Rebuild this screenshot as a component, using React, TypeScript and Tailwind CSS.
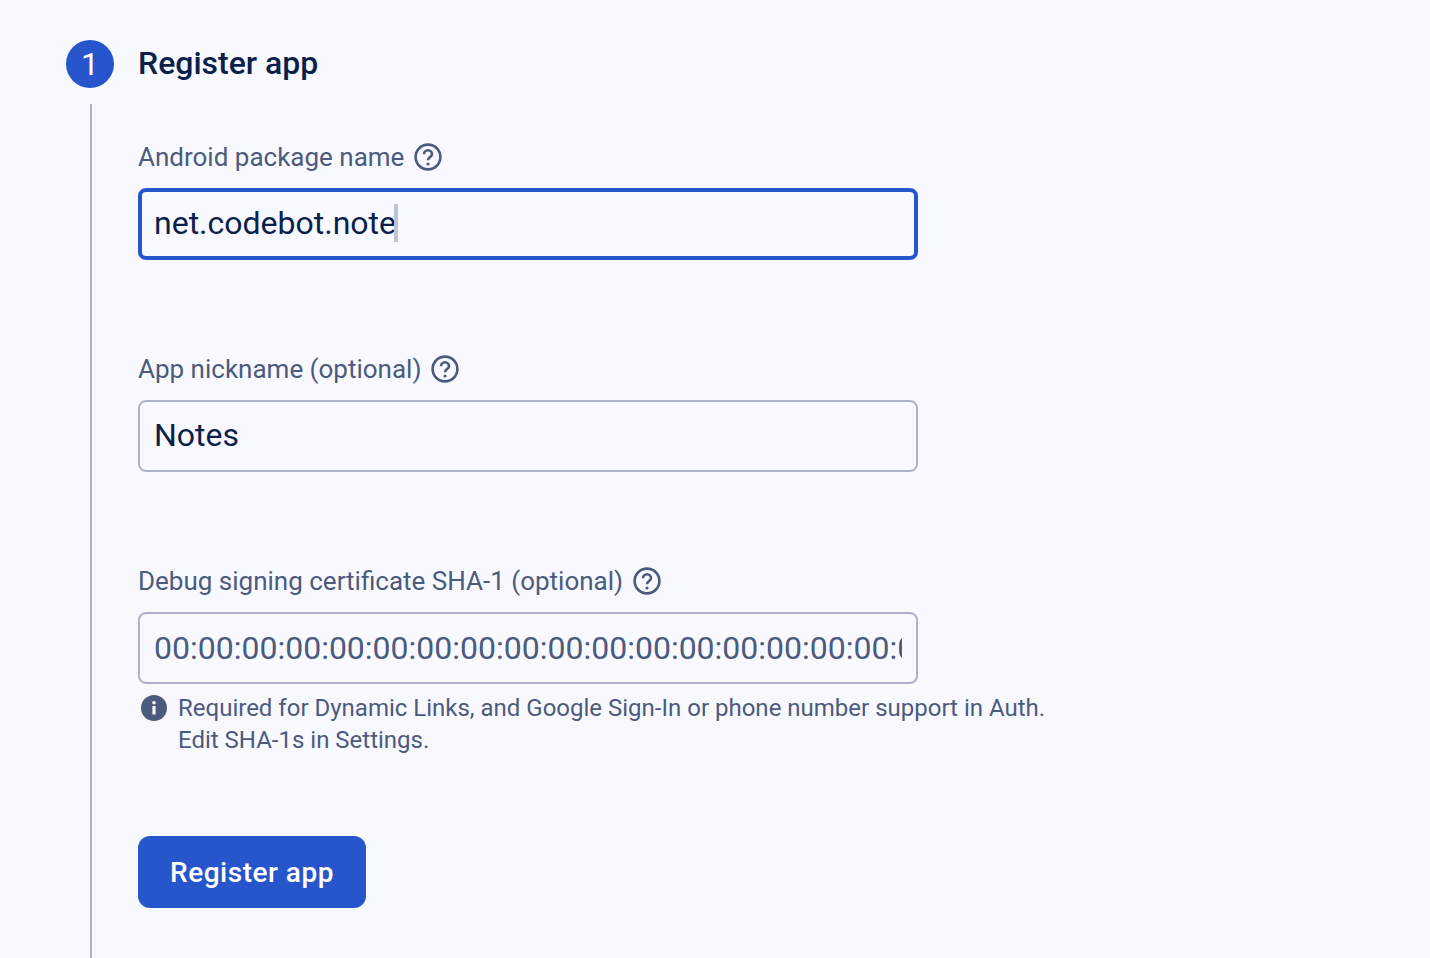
import React from "react";

function HelpIcon() {
  return (
    <svg width="28" height="28" viewBox="0 0 28 28" fill="none" className="block shrink-0">
      <circle cx="14" cy="14" r="12.4" stroke="#4c5a7e" strokeWidth="2.6" />
      <path d="M10 11.2a4 4 0 0 1 8 0c0 2.7-4 3-4 6" stroke="#4c5a7e" strokeWidth="2.6" />
      <circle cx="14" cy="21" r="1.6" fill="#4c5a7e" />
    </svg>
  );
}

function FieldLabel({ text }: { text: string }) {
  return (
    <div className="flex h-[28px] items-center gap-[10px] text-[26px] leading-[28px] text-[#4c5a7e]">
      <span>{text}</span>
      <HelpIcon />
    </div>
  );
}

export default function App() {
  return (
    <div className="h-[958px] overflow-hidden bg-[#f8f9fe] font-['Roboto',sans-serif]">
      <div className="flex items-center gap-[24px] pl-[66px] pt-[40px]">
        <div className="flex h-[48px] w-[48px] items-center justify-center rounded-full bg-[#2756cc] text-[32px] font-normal text-white">
          1
        </div>
        <h1 className="h-[48px] text-[32px] leading-[46px] font-medium text-[#0b1f4d]">Register app</h1>
      </div>

      <div className="mt-[16px] ml-[90px] h-[854px] border-l-2 border-[#adb3c9] pl-[46px] pt-[39px]">
        <FieldLabel text="Android package name" />
        <div className="mt-[17px] flex h-[72px] w-[780px] items-center rounded-[8px] border-[4px] border-[#2756cc] pb-[2px] pl-[12px] text-[32px] text-[#0b1f4d]">
          <span>net.codebot.note</span>
          <span className="ml-[-2px] h-[38px] w-[4px] bg-[#bcc3d6]" />
        </div>

        <div className="mt-[95px]">
          <FieldLabel text="App nickname (optional)" />
        </div>
        <div className="mt-[17px] flex h-[72px] w-[780px] items-center rounded-[8px] border-2 border-[#adb3c9] pb-[2px] pl-[14px] text-[32px] text-[#0b1f4d]">
          Notes
        </div>

        <div className="mt-[95px]">
          <FieldLabel text="Debug signing certificate SHA-1 (optional)" />
        </div>
        <div className="mt-[17px] flex h-[72px] w-[780px] items-center rounded-[8px] border-2 border-[#adb3c9] pl-[14px] pr-[14px] text-[32px] text-[#4c5a7e]">
          <span className="block overflow-hidden whitespace-nowrap">
            00:00:00:00:00:00:00:00:00:00:00:00:00:00:00:00:00:00:00:00
          </span>
        </div>

        <div className="mt-[8px] flex w-[960px] gap-[11px] pl-[3px] text-[24px] leading-[32px] text-[#4c5a7e]">
          <svg width="26" height="26" viewBox="0 0 26 26" className="mt-[3px] block shrink-0">
            <circle cx="13" cy="13" r="13" fill="#4c5a7e" />
            <circle cx="13" cy="7.8" r="1.8" fill="#f8f9fe" />
            <rect x="11.4" y="11" width="3.2" height="8.5" fill="#f8f9fe" />
          </svg>
          <p className="whitespace-nowrap">
            Required for Dynamic Links, and Google Sign-In or phone number support in Auth.
            <br />
            Edit SHA-1s in Settings.
          </p>
        </div>

        <button className="mt-[80px] flex h-[72px] w-[228px] items-center justify-center rounded-[12px] bg-[#2756cc] pt-[2px] text-[28px] font-medium tracking-[0.5px] text-white">
          Register app
        </button>
      </div>
    </div>
  );
}
